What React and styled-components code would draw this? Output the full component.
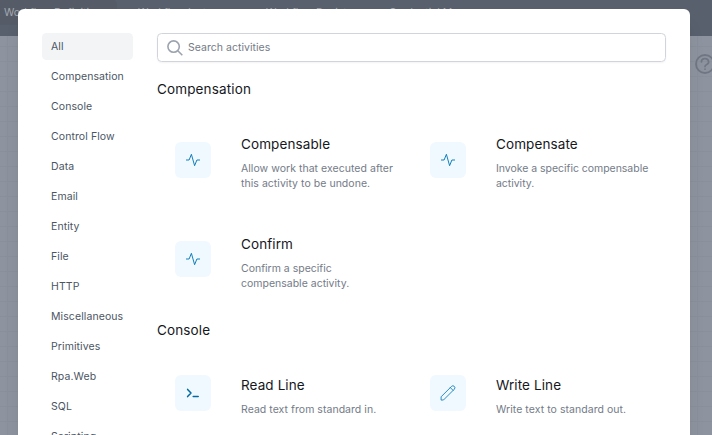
import React from "react";
import styled, { createGlobalStyle } from "styled-components";

const GlobalStyle = createGlobalStyle`
  *, *::before, *::after { box-sizing: border-box; }
  body { margin: 0; overflow: hidden; font-family: Inter, "Liberation Sans", sans-serif; }
  h2, h3, p { margin: 0; font-weight: 400; }
`;

const Screen = styled.div`
  position: relative;
  height: 435px;
  overflow: hidden;
  display: flex;
  flex-direction: column;
`;

const TopBar = styled.nav`
  flex: none;
  height: 36px;
  background: #59606d;
  color: #a3a8b0;
  font-size: 10.5px;
  line-height: 15px;
  white-space: nowrap;
  display: flex;
  align-items: flex-start;
`;

const TopLink = styled.span`
  flex: none;
  width: ${(p) => p.$width}px;
  height: 25px;
  padding: 5px 0 0 ${(p) => p.$pad}px;
  border-radius: 0 4px 4px 0;
  background: ${(p) => (p.$active ? "#555c68" : "transparent")};
`;

const Canvas = styled.div`
  flex: 1;
  display: flex;
  justify-content: flex-end;
  align-items: flex-start;
  padding-top: 18px;
  background-color: #8e949f;
  background-image: linear-gradient(#8a909b 1px, transparent 1px),
    linear-gradient(90deg, #8a909b 1px, transparent 1px);
  background-size: 15px 15px;
  background-position: 7px 10px;
`;

const Help = styled.svg`
  flex: none;
  width: 20px;
  height: 20px;
  margin-right: -3px;
  fill: none;
  stroke: #707784;
  stroke-width: 1.8;
  stroke-linecap: round;
`;

const Modal = styled.div`
  position: absolute;
  top: 9px;
  left: 18px;
  width: 672px;
  height: 480px;
  padding: 24px;
  display: flex;
  gap: 24px;
  background: #fff;
  border-radius: 6px;
  box-shadow: 0 15px 19px -4px rgba(0, 0, 0, 0.1), 0 8px 8px -4px rgba(0, 0, 0, 0.04);
`;

const Sidebar = styled.nav`
  flex: none;
  width: 91px;
  display: flex;
  flex-direction: column;
  gap: 3px;
`;

const Category = styled.a`
  flex: none;
  height: 27px;
  padding: 0 9px;
  border-radius: 4.5px;
  background: ${(p) => (p.$active ? "#f3f4f6" : "transparent")};
  color: #4b5563;
  font-size: 10.5px;
  line-height: 27px;
  letter-spacing: 0.09px;
  white-space: nowrap;
`;

const Main = styled.main`
  flex: none;
  width: 509px;
`;

const SearchBox = styled.label`
  display: flex;
  align-items: center;
  height: 29px;
  padding-left: 9px;
  gap: 5px;
  border: 1px solid #d1d5db;
  border-radius: 4.5px;
  box-shadow: 0 1px 2px rgba(0, 0, 0, 0.05);
`;

const SearchIcon = styled.svg`
  width: 16px;
  height: 16px;
  flex: none;
  fill: none;
  stroke: #9ca3af;
  stroke-width: 1.6;
`;

const SearchInput = styled.input`
  flex: 1;
  border: 0;
  outline: 0;
  padding: 0;
  background: transparent;
  font: 10.5px/15px Inter, sans-serif;
  letter-spacing: 0.03px;
  &::placeholder { color: #747b88; opacity: 1; }
`;

const SectionTitle = styled.h2`
  height: 18px;
  margin-top: ${(p) => p.$top}px;
  color: #16181d;
  font-size: 13.5px;
  line-height: 18px;
  letter-spacing: 0.14px;
`;

const CardGrid = styled.div`
  display: grid;
  grid-template-columns: 255px 254px;
  row-gap: ${(p) => p.$rowGap || 0}px;
  padding-top: ${(p) => p.$top}px;
`;

const Card = styled.article`
  display: flex;
  align-items: flex-start;
  gap: 30px;
  padding-left: 18px;
  height: 57px;
`;

const Tile = styled.div`
  flex: none;
  display: flex;
  align-items: center;
  justify-content: center;
  width: 36px;
  height: 36px;
  margin-top: ${(p) => p.$top}px;
  border-radius: 6px;
  background: #f0f9ff;
`;

const Glyph = styled.svg`
  width: 18px;
  height: 18px;
  fill: none;
  stroke: #0369a1;
  stroke-linecap: round;
  stroke-linejoin: round;
`;

const CardTitle = styled.h3`
  color: #16181d;
  font-size: 13.5px;
  line-height: 18px;
  letter-spacing: 0.1px;
`;

const Description = styled.p`
  width: 156px;
  margin-top: 8px;
  color: #747b88;
  font-size: 10.5px;
  line-height: 15px;
  letter-spacing: ${(p) => p.$tracking}px;
`;

const Activity = () => (
  <Glyph viewBox="0 0 18 18" strokeWidth="0.95">
    <path stroke="#0878b5" d="M2.4 9h2.7l2.3-5.7 3.2 11.4L12.9 9h2.7" />
  </Glyph>
);

const Terminal = () => (
  <Glyph viewBox="0 0 18 18" strokeWidth="1.5">
    <path d="M3.6 5.4L7 9l-3.4 3.6M9.2 12.6h5" />
  </Glyph>
);

const Pencil = () => (
  <Glyph viewBox="0 0 18 18" strokeWidth="0.85">
    <path
      stroke="#0878b5"
      d="M2.1 15.7v-2.9L12.5 2.4a1.9 1.9 0 0 1 2.8 2.8L4.8 15.7zM11.3 3.6l2.8 2.8"
    />
  </Glyph>
);

const icons = { activity: Activity, terminal: Terminal, pencil: Pencil };

const categories = [
  "All", "Compensation", "Console", "Control Flow", "Data", "Email", "Entity", "File",
  "HTTP", "Miscellaneous", "Primitives", "Rpa.Web", "SQL", "Scripting",
];

const compensation = [
  { title: "Compensable", text: "Allow work that executed after this activity to be undone.", icon: "activity", top: 7, tracking: 0.04 },
  { title: "Compensate", text: "Invoke a specific compensable activity.", icon: "activity", top: 7, tracking: -0.03 },
  { title: "Confirm", text: "Confirm a specific compensable activity.", icon: "activity", top: 6, tracking: 0 },
];

const consoleCards = [
  { title: "Read Line", text: "Read text from standard in.", icon: "terminal", top: -1, tracking: 0.04 },
  { title: "Write Line", text: "Write text to standard out.", icon: "pencil", top: -1, tracking: 0.05 },
];

function ActivityCard({ title, text, icon, top, tracking }) {
  const Icon = icons[icon];
  return (
    <Card>
      <Tile $top={top}><Icon /></Tile>
      <div>
        <CardTitle>{title}</CardTitle>
        <Description $tracking={tracking}>{text}</Description>
      </div>
    </Card>
  );
}

export default function App() {
  return (
    <>
      <GlobalStyle />
      <Screen>
        <TopBar>
          <TopLink $active $width={117} $pad={4}>Workflow Definitions</TopLink>
          <TopLink $width={130} $pad={21}>Workflow Instances</TopLink>
          <TopLink $width={130} $pad={19}>Workflow Registry</TopLink>
          <TopLink $width={130} $pad={12}>Credential Manager</TopLink>
        </TopBar>
        <Canvas>
          <Help viewBox="0 0 20 20">
            <circle cx="10" cy="10" r="9" />
            <path d="M6.4 8a3.6 3.2 0 1 1 5 2.7Q10 11.3 10 12.6M10 15v.2" strokeWidth="1.7" />
          </Help>
        </Canvas>
        <Modal>
          <Sidebar>
            {categories.map((name, i) => (
              <Category key={name} $active={i === 0}>{name}</Category>
            ))}
          </Sidebar>
          <Main>
            <SearchBox>
              <SearchIcon viewBox="0 0 16 16">
                <circle cx="6.6" cy="6.6" r="5.7" />
                <path d="M10.8 10.8L15.3 15.3" />
              </SearchIcon>
              <SearchInput placeholder="Search activities" />
            </SearchBox>
            <SectionTitle $top={18}>Compensation</SectionTitle>
            <CardGrid $top={37} $rowGap={43}>
              {compensation.map((c) => <ActivityCard key={c.title} {...c} />)}
            </CardGrid>
            <SectionTitle $top={29}>Console</SectionTitle>
            <CardGrid $top={37}>
              {consoleCards.map((c) => <ActivityCard key={c.title} {...c} />)}
            </CardGrid>
          </Main>
        </Modal>
      </Screen>
    </>
  );
}
